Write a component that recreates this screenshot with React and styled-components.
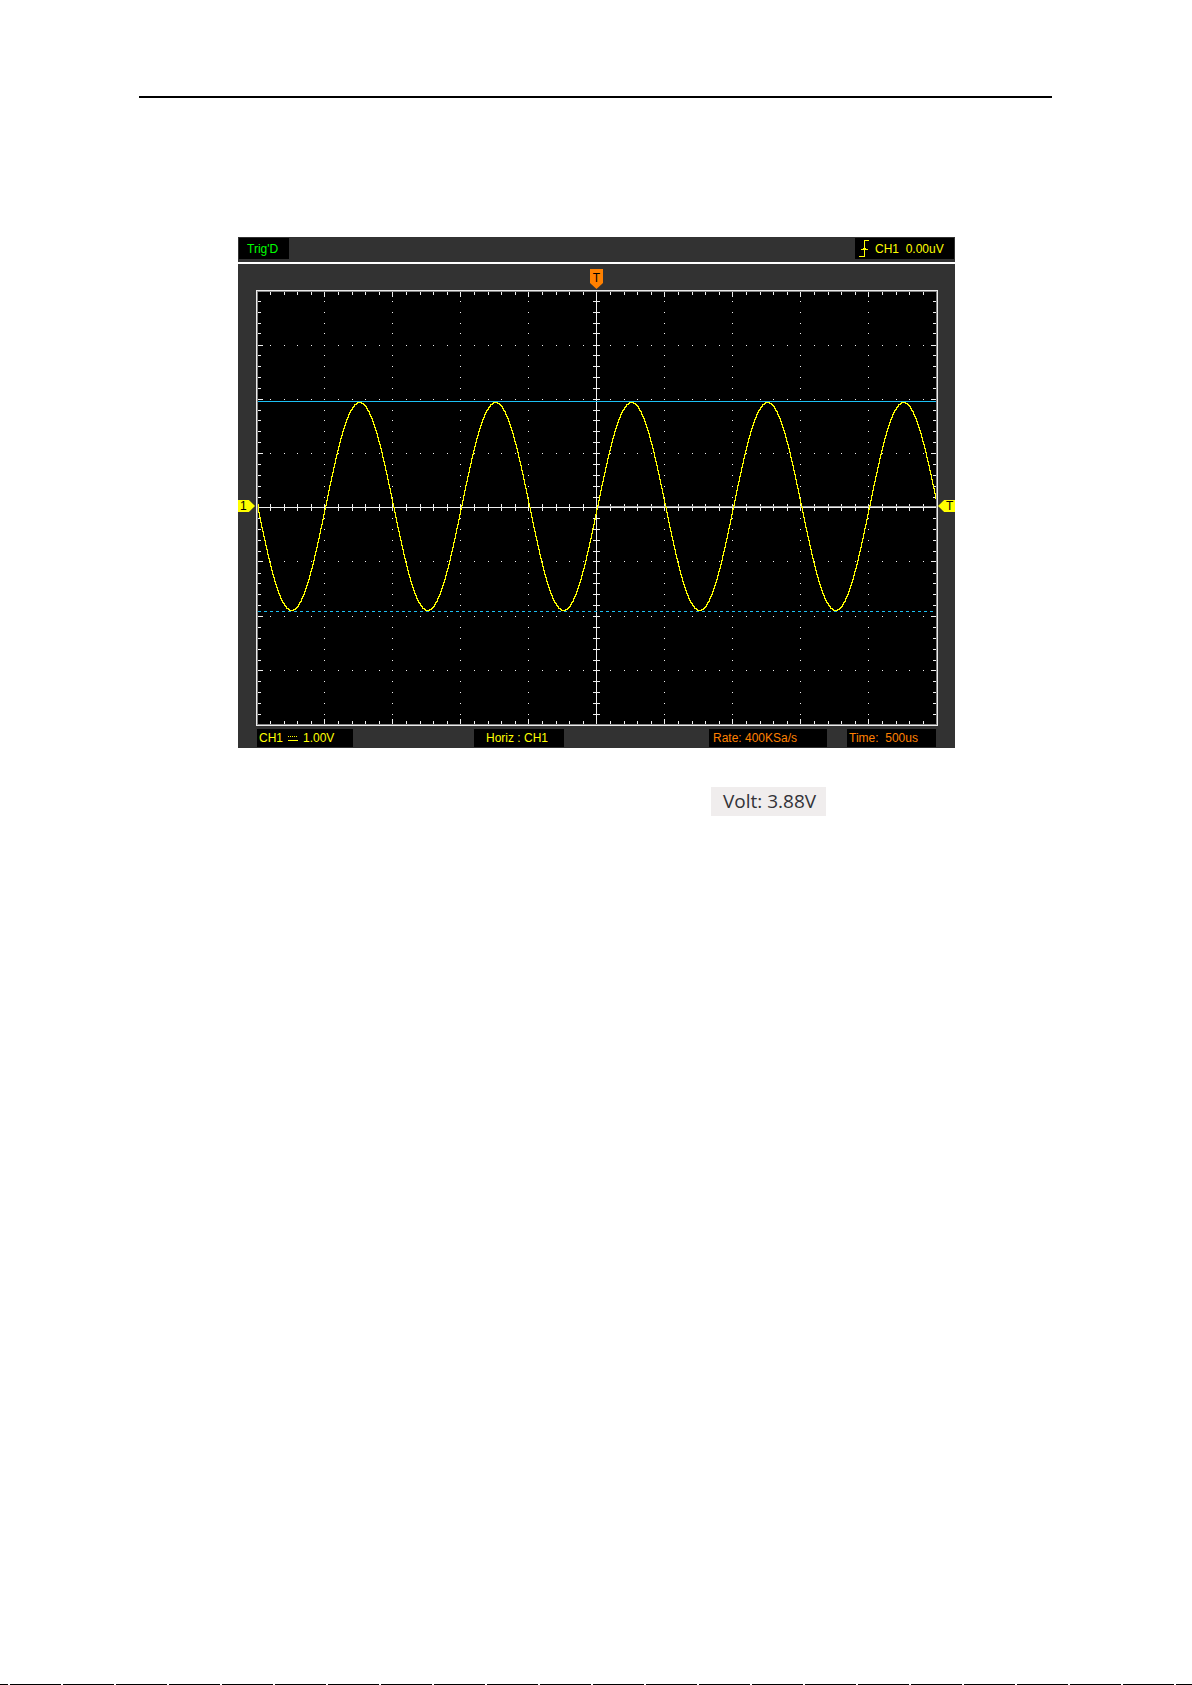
import React from "react";
import styled, { createGlobalStyle } from "styled-components";

const GlobalStyle = createGlobalStyle`
  * { box-sizing: border-box; }
  body { margin: 0; background: #fff; font-family: "Liberation Sans", Arial, sans-serif; }
`;

const Page = styled.div`
  min-height: 100vh;
  display: flex;
  flex-direction: column;
`;

const PageHeader = styled.header`
  padding: 96px 140px 0 139px;
`;

const Rule = styled.hr`
  height: 2px;
  margin: 0;
  border: 0;
  background: #000;
`;

const Main = styled.main`
  flex: 1;
  padding: 139px 139px 0 140px;
`;

const Figure = styled.figure`
  width: 717px;
  max-width: 100%;
  margin: 0 auto;
`;

const Panel = styled.section`
  background: #323232;
  font-size: 12px;
  line-height: 18px;
`;

const TopBar = styled.div`
  display: flex;
  justify-content: space-between;
  padding: 1px 1px 3px;
  border-bottom: 2px solid #fff;
`;

const Readout = styled.div`
  display: flex;
  align-items: center;
  gap: ${(p) => p.$gap || 4}px;
  width: ${(p) => p.$width}px;
  height: ${(p) => p.$height || 18}px;
  padding-left: ${(p) => p.$inset}px;
  background: #000;
  color: ${(p) => p.$color};
  white-space: pre;
`;

const TriggerRow = styled.div`
  display: flex;
  justify-content: center;
  height: 26px;
  padding: 5px 18px 0;
`;

const TriggerFlag = styled.span`
  width: 13px;
  height: 20px;
  background: #ff8000;
  color: #000;
  text-align: center;
  clip-path: polygon(0 0, 100% 0, 100% 70%, 50% 100%, 0 70%);
`;

const ScopeRow = styled.div`
  display: grid;
  grid-template-columns: 18px minmax(0, 1fr) 17px;
`;

const Gutter = styled.div`
  display: flex;
  align-items: center;
  padding-bottom: 4px;
`;

const LevelFlag = styled.span`
  width: 17px;
  height: 12px;
  padding: ${(p) => (p.$right ? "0 0 0 8px" : "0 0 0 2px")};
  line-height: 12px;
  background: #ff0;
  color: #000;
  clip-path: ${(p) =>
    p.$right
      ? "polygon(0 50%, 36% 0, 100% 0, 100% 100%, 36% 100%)"
      : "polygon(0 0, 64% 0, 100% 50%, 64% 100%, 0 100%)"};
`;

const Screen = styled.svg`
  display: block;
  width: 100%;
  height: auto;
`;

const StatusBar = styled.div`
  display: grid;
  grid-template-columns: 197px 1fr auto auto;
  column-gap: 20px;
  padding: 3px 19px 1px;
`;

const Measurement = styled.div`
  display: flex;
  justify-content: flex-end;
  padding: 39px 129px 0 0;
`;

const Volt = styled.output`
  width: 115px;
  height: 29px;
  padding-left: 12px;
  background: #f0eded;
  color: #333338;
  font: 19px/28px "Open Sans", "Noto Sans", sans-serif;
  white-space: nowrap;
`;

const PageEdge = styled.footer`
  height: 1px;
  background: repeating-linear-gradient(90deg, #000 0 8px, #fff 8px 10px, #000 10px 53px);
`;

const W = 682;
const H = 436;
const AXIS_X = 340;
const AXIS_Y = 217;
const DIVISION_Y = [0, 55, 109, 163, 217, 271, 326, 380, 434];
const COLS = Array.from({ length: 49 }, (_, i) => i + 1);
const ROWS = Array.from({ length: 39 }, (_, i) => i + 1);
const colX = (k) => (k % 5 === 0 ? (k / 5) * 68 : Math.ceil(k * 13.6));
const rowY = (k) => (k % 5 === 0 ? DIVISION_Y[k / 5] : Math.round(k * 10.87));

function gridPath() {
  let d = "";
  const box = (x, y, w, h) => {
    d += `M${x} ${y}h${w}v${h}h${-w}z`;
  };
  COLS.forEach((k) => {
    const len = k % 5 === 0 ? 5 : 3;
    const x = colX(k);
    box(x, 2, 1, len);
    box(x, H - 2 - len, 1, len);
    box(x, AXIS_Y - 3, 1, 7);
    ROWS.filter((r) => r % 5 === 0).forEach((r) => box(x, rowY(r), 1, 1));
  });
  ROWS.forEach((r) => {
    const len = r % 5 === 0 ? 5 : 3;
    const y = rowY(r);
    box(2, y, len, 1);
    box(W - 2 - len, y, len, 1);
    box(AXIS_X - 3, y, 7, 1);
    COLS.filter((k) => k % 5 === 0).forEach((k) => box(colX(k), y, 1, 1));
  });
  return d;
}

function wavePath() {
  let d = "M2.5 213.5";
  for (let x = 2; x < W - 2; x += 1) {
    const y = 216 - 104 * Math.sin((2 * Math.PI * (x - 340.7)) / 136);
    d += `H${x + 0.5}V${Math.round(y) + 0.5}`;
  }
  return d;
}

function Waveform() {
  return (
    <Screen viewBox={`0 0 ${W} ${H}`} role="img" aria-label="CH1 sine wave" shapeRendering="crispEdges">
      <rect width={W} height={H} fill="#ececec" />
      <rect x="1" y="1" width={W - 2} height={H - 2} fill="#858585" />
      <rect x="2" y="2" width={W - 4} height={H - 4} fill="#000" />
      <path d={gridPath()} fill="#f0f0f0" />
      <rect x={AXIS_X} y="2" width="1" height={H - 4} fill="#f0f0f0" />
      <rect x="2" y={AXIS_Y} width={W - 4} height="1" fill="#f0f0f0" />
      <rect x={AXIS_X + 1} y={AXIS_Y - 1} width={AXIS_X - 1} height="1" fill="#a0a0a0" />
      <path d={`M2 111.5H${W - 2}`} stroke="#1cc0f4" />
      <path d={`M2 321.5H${W - 2}`} stroke="#1cc0f4" strokeDasharray="3 3" />
      <path d={wavePath()} fill="none" stroke="#ff0" />
    </Screen>
  );
}

function EdgeIcon() {
  return (
    <svg width="10" height="17" viewBox="0 0 10 17" fill="none" shapeRendering="crispEdges" aria-hidden="true">
      <path d="M0 16.5H5.5V0.5H10" stroke="#ff0" />
      <path d="M5 7h1v1h1v1h2v1H2V9h2V8h1z" fill="#ff0" />
    </svg>
  );
}

function DcIcon() {
  return (
    <svg width="10" height="6" viewBox="0 0 10 6" shapeRendering="crispEdges" aria-hidden="true">
      <path d="M0 1.5H10" stroke="#ff0" strokeDasharray="1 1" />
      <path d="M0 5.5H10" stroke="#ff0" />
    </svg>
  );
}

export default function App() {
  return (
    <Page>
      <GlobalStyle />
      <PageHeader>
        <Rule />
      </PageHeader>
      <Main>
        <Figure>
          <Panel>
            <TopBar>
              <Readout $width={50} $height={21} $inset={8} $color="#00ff00">Trig'D</Readout>
              <Readout $width={99} $height={21} $inset={4} $gap={6} $color="#ffff00">
                <EdgeIcon />
                <span>{"CH1  0.00uV"}</span>
              </Readout>
            </TopBar>
            <TriggerRow>
              <TriggerFlag>T</TriggerFlag>
            </TriggerRow>
            <ScopeRow>
              <Gutter>
                <LevelFlag>1</LevelFlag>
              </Gutter>
              <Waveform />
              <Gutter>
                <LevelFlag $right>T</LevelFlag>
              </Gutter>
            </ScopeRow>
            <StatusBar>
              <Readout $width={96} $inset={2} $gap={5} $color="#ffff00">
                <span>CH1</span>
                <DcIcon />
                <span>1.00V</span>
              </Readout>
              <Readout $width={90} $inset={12} $color="#ffff00">Horiz : CH1</Readout>
              <Readout $width={118} $inset={4} $color="#ff8000">Rate: 400KSa/s</Readout>
              <Readout $width={89} $inset={2} $color="#ff8000">{"Time:  500us"}</Readout>
            </StatusBar>
          </Panel>
          <Measurement>
            <Volt>Volt: 3.88V</Volt>
          </Measurement>
        </Figure>
      </Main>
      <PageEdge />
    </Page>
  );
}
